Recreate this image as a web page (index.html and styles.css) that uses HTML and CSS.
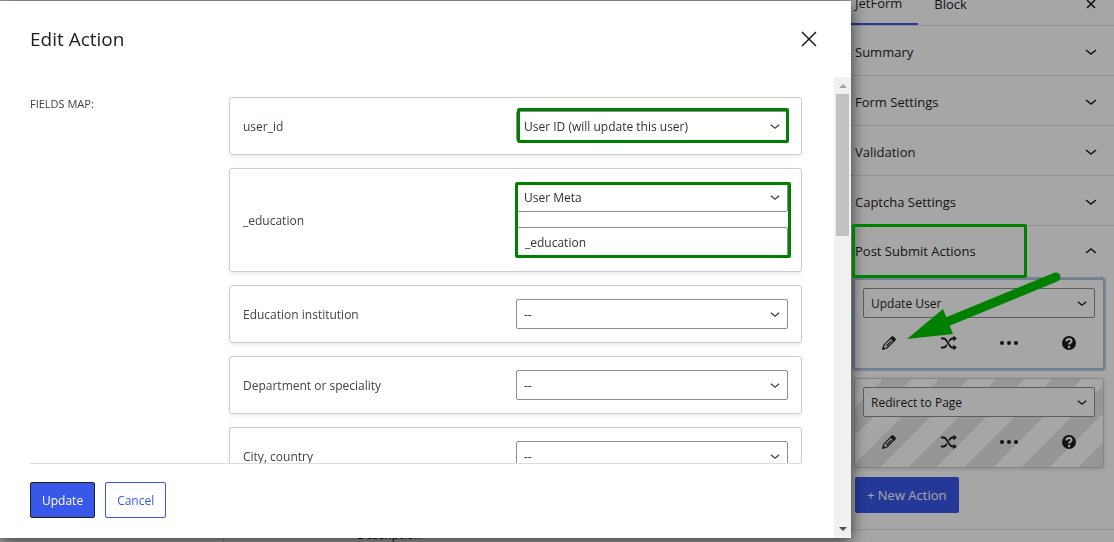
FILE: index.html
```html
<!DOCTYPE html>
<html lang="en">
<head>
    <meta charset="UTF-8">
    <meta name="viewport" content="width=device-width, initial-scale=1.0">
    <title>Edit Action</title>
    <link rel="stylesheet" href="styles.css">
</head>
<body>
    <svg class="sprite" aria-hidden="true">
        <symbol id="chevron" viewBox="0 0 12 8">
            <path d="M1 2 L6 6 L11 2" fill="none" stroke="currentColor" stroke-width="1.6"/>
        </symbol>
        <symbol id="pencil" viewBox="0 0 16 16">
            <path d="M2.2 13.8 L3 10 L9.8 3.2 L12.8 6.2 L6 13 Z M5.4 11 L10.6 5.8" fill="none" stroke="currentColor" stroke-width="1.2"/>
            <path d="M1 15 L1.9 11.2 L4.8 14.1 Z M9.4 2.8 L10.8 1.4 Q11.6 0.8 12.4 1.4 L14.6 3.6 Q15.2 4.4 14.6 5.2 L13.2 6.6 Z" fill="currentColor"/>
        </symbol>
        <symbol id="shuffle" viewBox="0 0 16 16">
            <path d="M0 3.5 H2.6 Q4 3.5 5 5 L9 11 Q10 12.5 11.4 12.5 H13 M0 12.5 H2.6 Q4 12.5 5 11 L5.8 9.8 M8 6.4 L9 5 Q10 3.5 11.4 3.5 H13" fill="none" stroke="currentColor" stroke-width="1.8"/>
            <path d="M12.4 0.8 L16 3.5 L12.4 6.2 Z M12.4 9.8 L16 12.5 L12.4 15.2 Z" fill="currentColor"/>
        </symbol>
        <symbol id="dots" viewBox="0 0 20 16">
            <g fill="currentColor"><circle cx="3" cy="8" r="2"/><circle cx="10" cy="8" r="2"/><circle cx="17" cy="8" r="2"/></g>
        </symbol>
        <symbol id="help" viewBox="0 0 16 16">
            <circle cx="8" cy="8" r="7" fill="currentColor"/>
            <path d="M5.4 6.4 Q5.6 4 8 4 Q10.5 4 10.5 6 Q10.5 7.1 9.3 7.8 Q8.1 8.4 8.1 9.6" fill="none" stroke="#fff" stroke-width="2"/>
            <circle cx="8.1" cy="12" r="1.2" fill="#fff"/>
        </symbol>
    </svg>

    <div class="page">
        <main class="editor">
            <div class="editor-block">Description</div>
        </main>
        <aside class="sidebar">
            <div class="tabs">
                <button class="tab active">JetForm</button>
                <button class="tab">Block</button>
                <button class="tab-close" aria-label="Close settings">
                    <svg viewBox="0 0 10 10"><path d="M1 1 L9 9 M9 1 L1 9" stroke="currentColor" stroke-width="1.6"/></svg>
                </button>
            </div>
            <button class="panel">Summary <svg><use href="#chevron"/></svg></button>
            <button class="panel">Form Settings <svg><use href="#chevron"/></svg></button>
            <button class="panel">Validation <svg><use href="#chevron"/></svg></button>
            <button class="panel">Captcha Settings <svg><use href="#chevron"/></svg></button>
            <section class="actions">
                <button class="panel open">Post Submit Actions <svg><use href="#chevron"/></svg></button>
                <div class="action selected">
                    <div class="select">
                        <select aria-label="Action type"><option>Update User</option></select>
                        <svg><use href="#chevron"/></svg>
                    </div>
                    <div class="tools">
                        <button aria-label="Edit"><svg><use href="#pencil"/></svg></button>
                        <button aria-label="Conditions"><svg><use href="#shuffle"/></svg></button>
                        <button aria-label="More"><svg class="wide"><use href="#dots"/></svg></button>
                        <button aria-label="Help"><svg><use href="#help"/></svg></button>
                    </div>
                </div>
                <div class="action disabled">
                    <div class="select">
                        <select aria-label="Action type"><option>Redirect to Page</option></select>
                        <svg><use href="#chevron"/></svg>
                    </div>
                    <div class="tools">
                        <button aria-label="Edit"><svg><use href="#pencil"/></svg></button>
                        <button aria-label="Conditions"><svg><use href="#shuffle"/></svg></button>
                        <button aria-label="More"><svg class="wide"><use href="#dots"/></svg></button>
                        <button aria-label="Help"><svg><use href="#help"/></svg></button>
                    </div>
                </div>
                <button class="btn primary new-action">+ New Action</button>
            </section>
        </aside>
    </div>

    <div class="overlay">
        <div class="modal" role="dialog" aria-labelledby="modal-title">
            <header class="modal-header">
                <h1 id="modal-title">Edit Action</h1>
                <button class="modal-close" aria-label="Close">
                    <svg viewBox="0 0 16 16"><path d="M1 1 L15 15 M15 1 L1 15" stroke="currentColor" stroke-width="1.5"/></svg>
                </button>
            </header>
            <div class="modal-body">
                <div class="modal-content">
                    <div class="fields">
                        <div class="fields-title">FIELDS MAP:</div>
                        <div class="fields-list">
                            <div class="field">
                                <label for="f1">user_id</label>
                                <div class="control">
                                    <div class="select">
                                        <select id="f1"><option>User ID (will update this user)</option></select>
                                        <svg><use href="#chevron"/></svg>
                                    </div>
                                    <span class="mark"></span>
                                </div>
                            </div>
                            <div class="field">
                                <label for="f2">_education</label>
                                <div class="control">
                                    <div class="select">
                                        <select id="f2"><option>User Meta</option></select>
                                        <svg><use href="#chevron"/></svg>
                                    </div>
                                    <input type="text" value="_education" aria-label="Meta key">
                                    <span class="mark mark-group"></span>
                                </div>
                            </div>
                            <div class="field">
                                <label for="f3">Education institution</label>
                                <div class="control">
                                    <div class="select">
                                        <select id="f3"><option>--</option></select>
                                        <svg><use href="#chevron"/></svg>
                                    </div>
                                </div>
                            </div>
                            <div class="field">
                                <label for="f4">Department or speciality</label>
                                <div class="control">
                                    <div class="select">
                                        <select id="f4"><option>--</option></select>
                                        <svg><use href="#chevron"/></svg>
                                    </div>
                                </div>
                            </div>
                            <div class="field">
                                <label for="f5">City, country</label>
                                <div class="control">
                                    <div class="select">
                                        <select id="f5"><option>--</option></select>
                                        <svg><use href="#chevron"/></svg>
                                    </div>
                                </div>
                            </div>
                        </div>
                    </div>
                    <footer class="modal-footer">
                        <button class="btn primary focused">Update</button>
                        <button class="btn secondary">Cancel</button>
                    </footer>
                </div>
                <div class="scrollbar" aria-hidden="true">
                    <svg class="arrow" viewBox="0 0 8 4"><path d="M0 4 L4 0 L8 4 Z" fill="#a3a3a3"/></svg>
                    <div class="thumb"></div>
                    <svg class="arrow" viewBox="0 0 8 4"><path d="M0 0 L4 4 L8 0 Z" fill="#505050"/></svg>
                </div>
            </div>
        </div>
    </div>

    <!-- highlights over the sidebar -->
    <div class="mark-panel"></div>
    <svg class="mark-arrow" viewBox="0 0 156 70">
        <path d="M149 7 L30 56" stroke="#008000" stroke-width="9" stroke-linecap="round"/>
        <path d="M0 69 L36 39 L46 64 Z" fill="#008000"/>
    </svg>
</body>
</html>
```
FILE: styles.css
```css
* {
    box-sizing: border-box;
}

body {
    margin: 0;
    height: 100vh;
    overflow: hidden;
    font-family: "Open Sans", "Noto Sans", sans-serif;
    font-size: 12px;
    color: #1e1e1e;
    background: #fff;
}

button, select, input {
    font: inherit;
    color: inherit;
    margin: 0;
}

button {
    background: none;
    border: none;
    padding: 0;
}

h1 {
    margin: 0;
    font-size: 19px;
    font-weight: 500;
}

.sprite {
    display: none;
}

.page {
    display: flex;
    height: 100vh;
}

.editor {
    display: flex;
    flex: 1;
    align-items: flex-end;
    padding-left: 223px;
}

.editor-block {
    flex: 1;
    padding-left: 133px;
    border-left: 1px solid #ccc;
    line-height: 14px;
}

/* Sidebar */
.sidebar {
    width: 276px;
    border-left: 1px solid #e0e0e0;
    font-size: 13px;
    font-weight: 500;
    overflow: hidden;
}

.tabs {
    display: flex;
    height: 48px;
    margin-top: -22px;
    border-bottom: 1px solid #e0e0e0;
}

.tab {
    padding: 4px 16px 0;
}

.tab.active {
    border-bottom: 2px solid #3858e9;
}

.tab-close {
    margin-left: auto;
    padding: 4px 18px 0;
}

.tab-close svg {
    display: block;
    width: 10px;
    height: 10px;
}

.panel {
    display: flex;
    align-items: center;
    justify-content: space-between;
    width: 100%;
    height: 50px;
    padding: 2px 17px 0 16px;
    border-bottom: 1px solid #e0e0e0;
}

.panel svg {
    width: 12px;
    height: 8px;
}

.panel.open {
    padding-top: 0;
    border-bottom: none;
}

.panel.open svg {
    transform: rotate(180deg);
}

.actions {
    padding-bottom: 16px;
    border-bottom: 1px solid #e0e0e0;
}

.action {
    margin: 3px 10px 9px 15px;
    padding: 8px;
    height: 90px;
    border: 1px solid #ccc;
    border-radius: 2px;
    box-shadow: 0 1px 4px rgba(0, 0, 0, 0.15);
    font-size: 12px;
    font-weight: 400;
}

.action.selected {
    border-color: #a8c0e0;
    box-shadow: 0 0 0 2px #b8cbe4;
}

.action.disabled {
    background: repeating-linear-gradient(135deg, #fff 0, #fff 20px, #e6e6e6 20px, #e6e6e6 40px);
}

.tools {
    display: grid;
    grid-template-columns: repeat(4, 1fr);
    justify-items: center;
    margin: 0 -4px;
    padding: 17px 0;
}

.tools svg {
    display: block;
    width: 16px;
    height: 16px;
}

.tools svg.wide {
    width: 20px;
}

.new-action {
    margin: 0 16px;
    font-weight: 400;
}

/* Form controls */
.select {
    position: relative;
}

.select select {
    display: block;
    width: 100%;
    height: 30px;
    padding: 0 24px 0 7px;
    border: 1px solid #8c8f94;
    border-radius: 2px;
    background: #fff;
    appearance: none;
}

.select svg {
    position: absolute;
    right: 8px;
    top: 12px;
    width: 10px;
    height: 7px;
    pointer-events: none;
}

.control input {
    width: 100%;
    height: 31px;
    margin-top: 15px;
    padding: 0 8px;
    border: 1px solid #8c8f94;
    border-radius: 2px;
}

.btn {
    height: 36px;
    padding: 0 11px;
    border-radius: 2px;
}

.btn.primary {
    padding: 0 12px;
    background: #3858e9;
    color: #fff;
}

.btn.focused {
    padding: 0 11px;
    border: 1px solid #1e1e1e;
}

.btn.secondary {
    border: 1px solid #3858e9;
    color: #3858e9;
}

/* Modal */
.overlay {
    position: fixed;
    inset: 0;
    padding: 1px 263px 4px 0;
    background: rgba(0, 0, 0, 0.35);
}

.modal {
    display: flex;
    flex-direction: column;
    height: 100%;
    background: #fff;
    box-shadow: 0 3px 15px rgba(0, 0, 0, 0.7);
}

.modal-header {
    display: flex;
    align-items: center;
    justify-content: space-between;
    height: 76px;
    padding: 0 34px 0 30px;
}

.modal-close svg {
    display: block;
    width: 16px;
    height: 16px;
}

.modal-body {
    display: flex;
    flex: 1;
    min-height: 0;
}

.modal-content {
    display: flex;
    flex: 1;
    flex-direction: column;
    padding: 0 32px 0 30px;
}

.fields {
    display: flex;
    flex: 1;
    min-height: 0;
    padding-top: 20px;
    overflow: hidden;
}

.fields-title {
    width: 199px;
    font-size: 11px;
    line-height: 14px;
    color: #3c434a;
}

.fields-list {
    flex: 1;
}

.field {
    display: flex;
    align-items: center;
    margin-bottom: 13px;
    padding: 13px;
    border: 1px solid #ccc;
    border-radius: 3px;
    box-shadow: 0 2px 4px rgba(0, 0, 0, 0.08);
    color: #3c434a;
}

.field label {
    flex: 1;
}

.control {
    position: relative;
    width: 272px;
}

.field select, .field input {
    color: #2c3338;
}

.mark {
    position: absolute;
    inset: -3px -1px -2px 1px;
    border: 3px solid #008000;
    border-radius: 2px;
    pointer-events: none;
}

.mark-group {
    inset: 0 -3px 0 -1px;
}

.modal-footer {
    display: flex;
    gap: 10px;
    padding: 18px 0 20px;
    border-top: 1px solid #ddd;
}

.scrollbar {
    display: flex;
    flex-direction: column;
    align-items: center;
    width: 17px;
    padding: 7px 0;
    background: #f1f1f1;
}

.scrollbar .arrow {
    width: 8px;
    height: 4px;
}

.thumb {
    width: 13px;
    height: 142px;
    margin: 6px 0 auto;
    background: #c1c1c1;
}

/* Highlights */
.mark-panel {
    position: absolute;
    top: 224px;
    right: 87px;
    width: 175px;
    height: 54px;
    border: 3px solid #008000;
    border-radius: 2px;
}

.mark-arrow {
    position: absolute;
    top: 270px;
    right: 51px;
    width: 156px;
    height: 70px;
}
```
